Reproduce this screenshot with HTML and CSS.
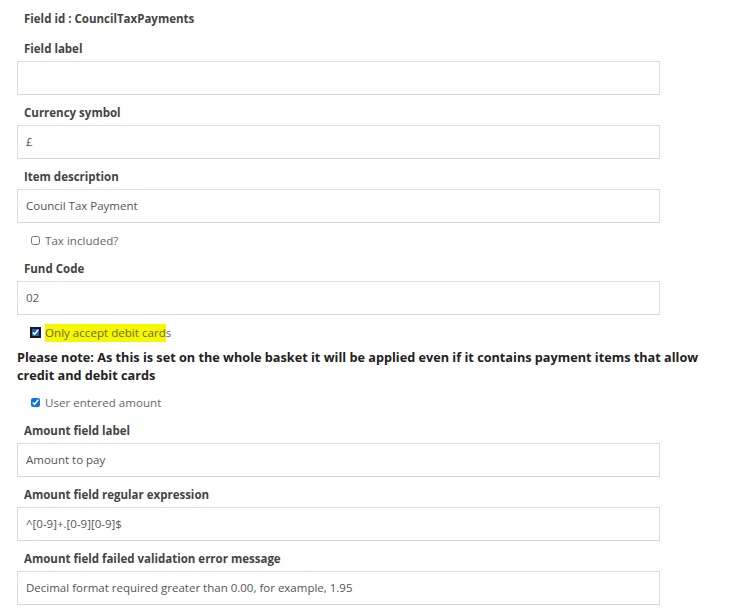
FILE: index.html
```html
<!DOCTYPE html>
<html lang="en">
<head>
    <meta charset="UTF-8">
    <meta name="viewport" content="width=device-width, initial-scale=1.0">
    <title>Payment field settings</title>
    <link rel="stylesheet" href="styles.css">
</head>
<body>

    <div class="editor">
        <p class="field-id">Field id : CouncilTaxPayments</p>

        <div class="form-group first">
            <label class="field-title">Field label</label>
            <input class="text-input" type="text" value="">
        </div>

        <div class="form-group">
            <label class="field-title">Currency symbol</label>
            <input class="text-input" type="text" value="£">
        </div>

        <div class="form-group">
            <label class="field-title">Item description</label>
            <input class="text-input" type="text" value="Council Tax Payment">
        </div>

        <!-- Checkbox rows -->
        <label class="check-row">
            <input type="checkbox" class="check">
            <span>Tax included?</span>
        </label>

        <div class="form-group after-check">
            <label class="field-title">Fund Code</label>
            <input class="text-input" type="text" value="02">
        </div>

        <label class="check-row">
            <input type="checkbox" class="check focused" checked>
            <span><mark class="highlight">Only accept debit card</mark>s</span>
        </label>

        <p class="note">Please note: As this is set on the whole basket it will be applied even if it contains payment items that allow credit and debit cards</p>

        <label class="check-row">
            <input type="checkbox" class="check" checked>
            <span>User entered amount</span>
        </label>

        <div class="form-group after-check">
            <label class="field-title">Amount field label</label>
            <input class="text-input" type="text" value="Amount to pay">
        </div>

        <div class="form-group">
            <label class="field-title">Amount field regular expression</label>
            <input class="text-input" type="text" value="^[0-9]+.[0-9][0-9]$">
        </div>

        <div class="form-group">
            <label class="field-title">Amount field failed validation error message</label>
            <input class="text-input" type="text" value="Decimal format required greater than 0.00, for example, 1.95">
        </div>
    </div>

</body>
</html>
```

FILE: styles.css
```css
body {
    font-family: 'Open Sans', 'Liberation Sans', sans-serif;
    background-color: #fff;
    color: #444;
    margin: 0;
    padding: 0;
}

.editor {
    display: flex;
    flex-direction: column;
    padding: 10px 0 0 17px;
    width: 715px;
}

.field-id {
    margin: 1px 0 0 7px;
    font-size: 11.5px;
    font-weight: 700;
    line-height: 16px;
    color: #444;
}

.form-group {
    display: flex;
    flex-direction: column;
    width: 643px;
    margin-top: 9px;
}

.form-group.first {
    margin-top: 13px;
}

.form-group.after-check {
    margin-top: 12px;
}

.field-title {
    font-size: 11.5px;
    font-weight: 700;
    line-height: 18px;
    margin: 0 0 3px 7px;
    color: #444;
}

.text-input {
    box-sizing: border-box;
    height: 34px;
    width: 100%;
    margin: 0;
    padding: 0 8px 2px;
    border: 1px solid #ddd;
    border-bottom-color: #d6d6d6;
    border-radius: 0;
    font-family: 'Open Sans', 'Liberation Sans', sans-serif;
    font-size: 11.5px;
    color: #555;
    background-color: #fff;
    outline: none;
}

/* Checkboxes */
.check-row {
    display: flex;
    align-items: center;
    height: 16px;
    margin: 9px 0 0 13px;
    font-size: 11.6px;
    color: #666;
}

.check {
    width: 9px;
    height: 9px;
    margin: 0 5px 0 1px;
    accent-color: #0a74e8;
}

.check.focused {
    outline: 2px solid #1a1a1a;
    outline-offset: -1px;
    accent-color: #1f5fd0;
}

.highlight {
    background-color: #f7f700;
    color: #6a6a1e;
    padding: 1px 0 2px;
}

.note {
    margin: 8px 0 0 0;
    font-size: 12.7px;
    font-weight: 700;
    line-height: 18px;
    color: #222;
}

.note + .check-row {
    margin-top: 10px;
}
```
